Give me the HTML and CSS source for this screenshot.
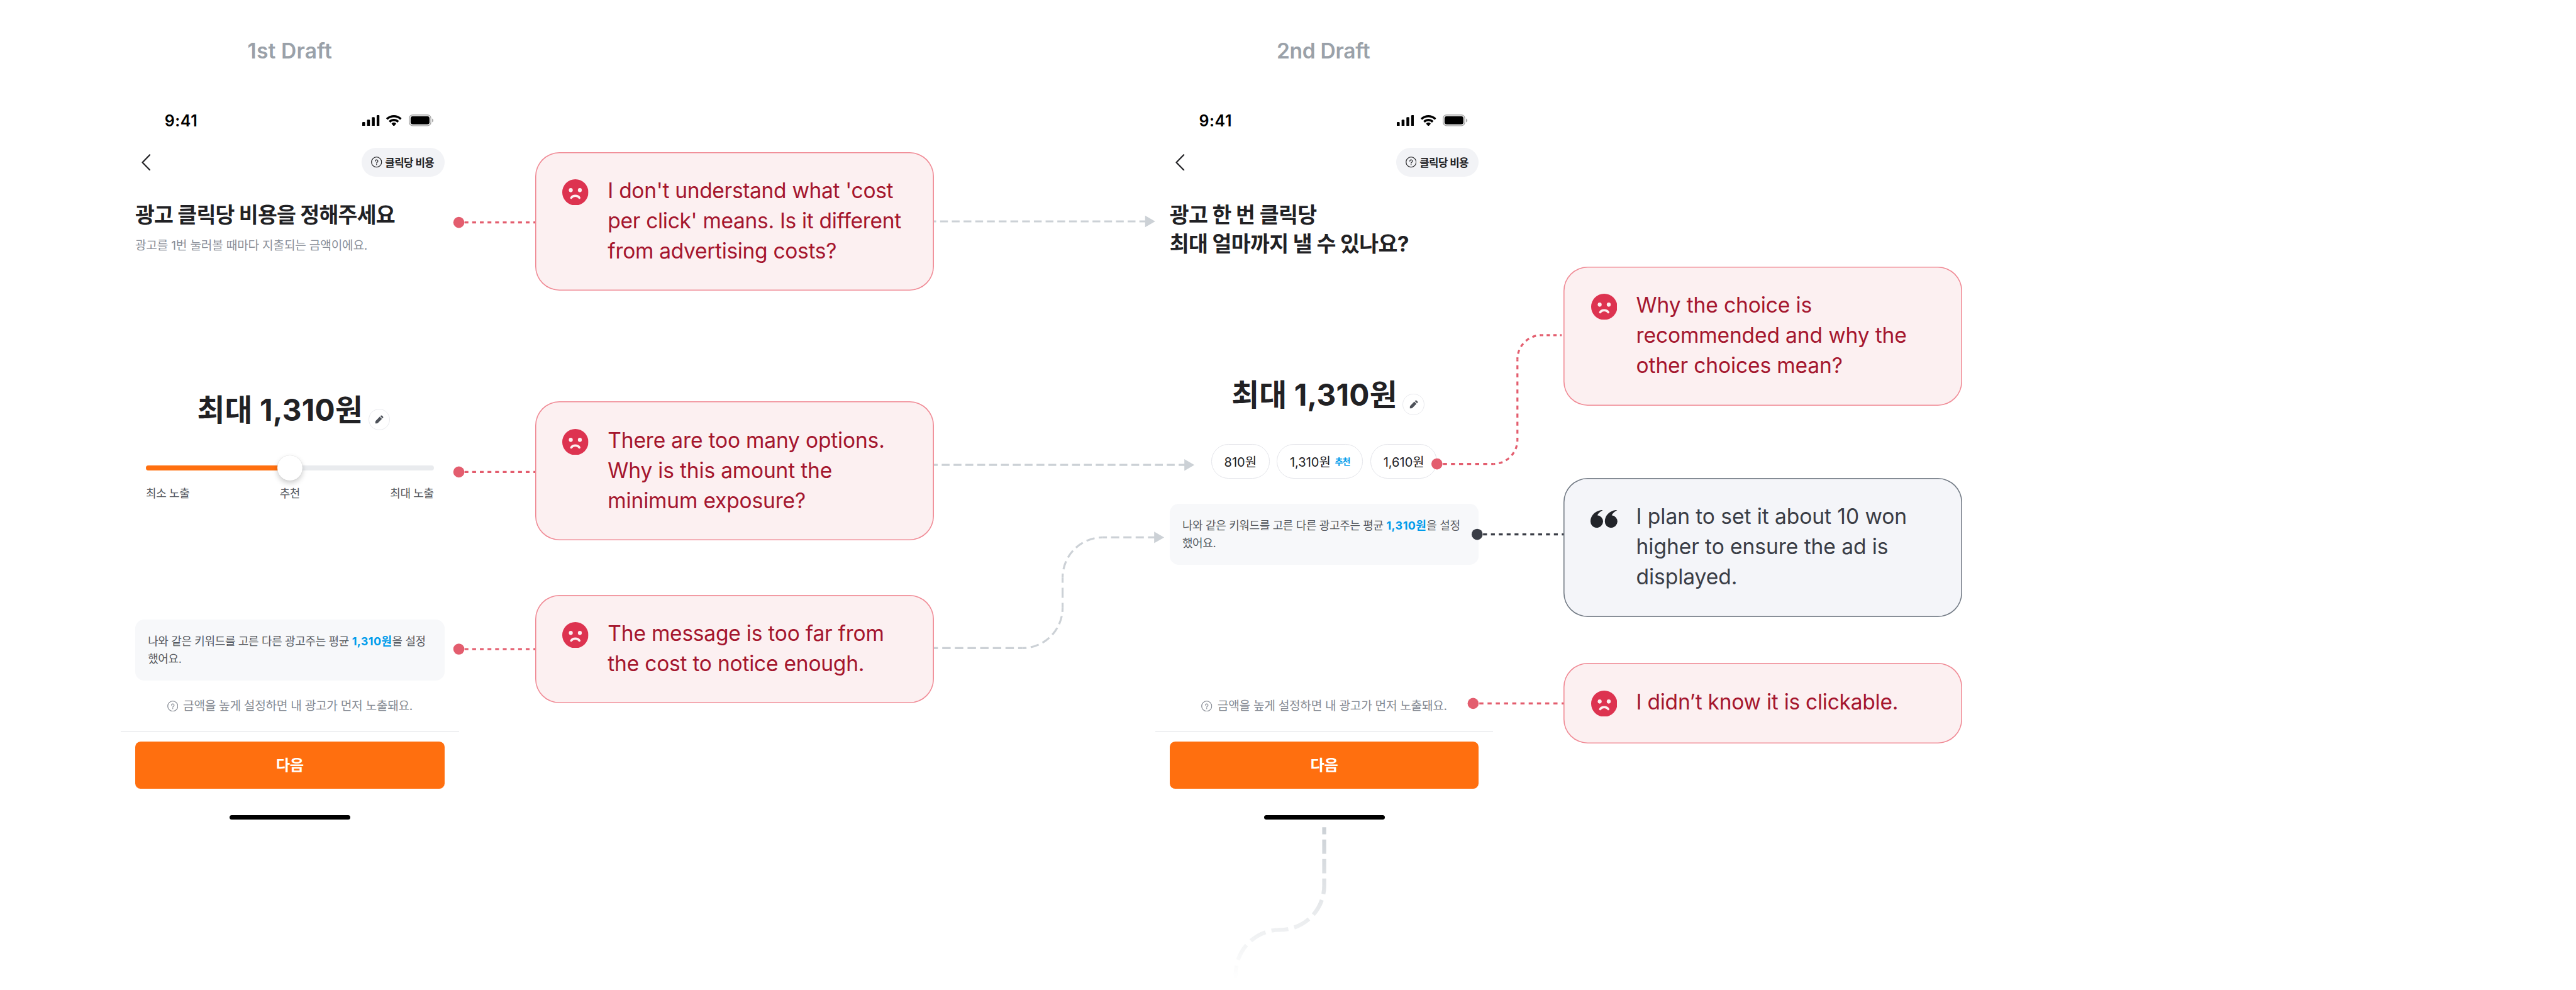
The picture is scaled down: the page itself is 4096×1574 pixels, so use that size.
FILE: index.html
```html
<!DOCTYPE html>
<html lang="ko">
<head>
<meta charset="utf-8">
<title>Draft review board</title>
<link rel="stylesheet" href="styles.css">
</head>
<body>
<svg class="defs" width="0" height="0" aria-hidden="true">
  <symbol id="signal" viewBox="0 0 19.2 12.4">
    <rect x="0" y="7.6" width="3.2" height="4.8" rx=".9"/><rect x="5.33" y="5.1" width="3.2" height="7.3" rx=".9"/>
    <rect x="10.66" y="2.3" width="3.2" height="10.1" rx=".9"/><rect x="16" y="0" width="3.2" height="12.4" rx=".9"/>
  </symbol>
  <symbol id="wifi" viewBox="0 0 17.15 12.33">
    <path d="M8.57 2.47c2.49 0 4.88.92 6.68 2.57.14.13.36.13.49 0l1.3-1.27a.34.34 0 0 0 0-.49C12.3-1.09 4.84-1.09.11 3.28a.34.34 0 0 0 0 .49l1.3 1.27c.13.13.35.13.48 0 1.8-1.65 4.2-2.57 6.68-2.57ZM8.57 6.69c1.36 0 2.66.51 3.67 1.43.14.13.35.13.48 0l1.29-1.32a.37.37 0 0 0 0-.52c-3.07-2.9-7.81-2.9-10.88 0a.37.37 0 0 0 0 .52l1.29 1.32c.13.13.34.13.48 0 1-.92 2.31-1.43 3.67-1.43ZM11.09 9.48a.4.4 0 0 1-.1.28l-2.18 2.46a.32.32 0 0 1-.48 0L6.15 9.76a.4.4 0 0 1 .01-.56c1.39-1.31 3.43-1.31 4.82 0 .07.07.11.17.11.28Z"/>
  </symbol>
  <symbol id="battery" viewBox="0 0 27.5 13">
    <rect x=".5" y=".5" width="24" height="12" rx="3.8" fill="none" stroke="#000" stroke-opacity=".35"/>
    <path d="M26 4.6v4.1c.8-.35 1.35-1.15 1.35-2.05S26.8 4.95 26 4.6Z" fill-opacity=".4"/>
    <rect x="2" y="2" width="21" height="9" rx="2.5"/>
  </symbol>
  <symbol id="help" viewBox="0 0 12 12">
    <g fill="none" stroke="currentColor" stroke-width=".85" stroke-linecap="round" stroke-linejoin="round"><circle cx="6" cy="6" r="5.5"/><path d="M4.6 4.9a1.42 1.42 0 1 1 2.25 1.15C6.3 6.45 6 6.7 6 7.25"/></g>
    <circle cx="6" cy="8.7" r=".5" fill="currentColor"/>
  </symbol>
  <symbol id="pencil" viewBox="0 0 14 14">
    <path d="M7.8 2.6 11.300 6.100 4.900 12.500Q4.100 13.300 3 13.300H.8V11.100Q.8 9.900 1.500 9.100ZM8.700 1.700 9.600.8Q10.500 0 11.400.8L13.100 2.500Q13.900 3.400 13.100 4.300L12.200 5.200Z"/>
  </symbol>
  <symbol id="sad" viewBox="0 0 52 52">
    <circle cx="26" cy="26" r="26" fill="#dd3350"/>
    <ellipse cx="17" cy="21.7" rx="3.9" ry="4.1" fill="#fcf0f1"/><ellipse cx="35" cy="21.7" rx="3.9" ry="4.1" fill="#fcf0f1"/>
    <path d="M17.8 37C19.3 34.4 22.3 32.8 26 32.8S32.7 34.4 34.2 37" fill="none" stroke="#fcf0f1" stroke-width="4.2" stroke-linecap="round"/>
  </symbol>
  <symbol id="quote" viewBox="0 0 54 35">
    <path d="M21.5 0 24.5.3C19 3.2 15 7 13.7 10.2A12.5 12.5 0 1 1 0 22.4C0 11.5 8.5 2 21.5 0Z" fill="#22242a"/>
    <path d="M50 0 53 .3C47.5 3.2 43.5 7 42.2 10.2A12.5 12.5 0 1 1 28.5 22.4C28.5 11.5 37 2 50 0Z" fill="#22242a"/>
  </symbol>
</svg>

<main class="board">
  <section class="draft draft-1">
    <h2 class="draft-name">1st Draft</h2>
    <div class="phone">
      <div class="status">
        <span class="time">9:41</span>
        <span class="status-icons"><svg class="i-signal"><use href="#signal"/></svg><svg class="i-wifi"><use href="#wifi"/></svg><svg class="i-battery"><use href="#battery"/></svg></span>
      </div>
      <div class="nav">
        <svg class="back" viewBox="0 0 14.4 26.4"><path d="M13.2 1.2 1.5 13.2 13.2 25.2"/></svg>
        <span class="pill"><svg class="i-help"><use href="#help"/></svg>클릭당 비용</span>
      </div>
      <div class="intro">
        <h1>광고 클릭당 비용을 정해주세요</h1>
        <p class="sub">광고를 1번 눌러볼 때마다 지출되는 금액이에요.</p>
      </div>
      <div class="price"><strong>최대 1,310원</strong><span class="edit"><svg><use href="#pencil"/></svg></span></div>
      <div class="slider"><div class="track"><div class="fill"></div></div><div class="thumb"></div></div>
      <div class="labels"><span>최소 노출</span><span>추천</span><span>최대 노출</span></div>
      <div class="bottom">
        <p class="info">나와 같은 키워드를 고른 다른 광고주는 평균 <b>1,310원</b>을 설정<br>했어요.</p>
        <p class="hint"><svg class="i-help"><use href="#help"/></svg>금액을 높게 설정하면 내 광고가 먼저 노출돼요.</p>
        <div class="footer"><button class="next">다음</button><div class="home"></div></div>
      </div>
    </div>
  </section>

  <section class="draft draft-2">
    <h2 class="draft-name">2nd Draft</h2>
    <div class="phone">
      <div class="status">
        <span class="time">9:41</span>
        <span class="status-icons"><svg class="i-signal"><use href="#signal"/></svg><svg class="i-wifi"><use href="#wifi"/></svg><svg class="i-battery"><use href="#battery"/></svg></span>
      </div>
      <div class="nav">
        <svg class="back" viewBox="0 0 14.4 26.4"><path d="M13.2 1.2 1.5 13.2 13.2 25.2"/></svg>
        <span class="pill"><svg class="i-help"><use href="#help"/></svg>클릭당 비용</span>
      </div>
      <div class="intro">
        <h1>광고 한 번 클릭당<br>최대 얼마까지 낼 수 있나요?</h1>
      </div>
      <div class="price"><strong>최대 1,310원</strong><span class="edit"><svg><use href="#pencil"/></svg></span></div>
      <div class="chips"><span class="chip">810원</span><span class="chip">1,310원<em>추천</em></span><span class="chip">1,610원</span></div>
      <p class="info">나와 같은 키워드를 고른 다른 광고주는 평균 <b>1,310원</b>을 설정<br>했어요.</p>
      <div class="bottom">
        <p class="hint"><svg class="i-help"><use href="#help"/></svg>금액을 높게 설정하면 내 광고가 먼저 노출돼요.</p>
        <div class="footer"><button class="next">다음</button><div class="home"></div></div>
      </div>
    </div>
  </section>

  <!-- Connectors: every straight or curved piece starts and ends on half a dash -->
  <svg class="connectors" viewBox="0 0 5120 1968" preserveAspectRatio="xMinYMin meet">
    <defs><linearGradient id="fade" gradientUnits="userSpaceOnUse" x1="0" y1="1644" x2="0" y2="1945"><stop offset="0" stop-color="#ccd1d6"/><stop offset="1" stop-color="#ccd1d6" stop-opacity="0"/></linearGradient></defs>
    <g class="line pink">
      <path d="M912 442H1064" stroke-dasharray="7.6 7.6" stroke-dashoffset="3.8"/>
      <path d="M912 938H1064" stroke-dasharray="7.6 7.6" stroke-dashoffset="3.8"/>
      <path d="M912 1290H1064" stroke-dasharray="7.6 7.6" stroke-dashoffset="3.8"/>
      <path d="M2856 922H2968" stroke-dasharray="8 8" stroke-dashoffset="4"/>
      <path d="M2968 922A48 48 0 0 0 3016 874" stroke-dasharray="7.54 7.54" stroke-dashoffset="3.77"/>
      <path d="M3016 874V714" stroke-dasharray="8 8" stroke-dashoffset="4"/>
      <path d="M3016 714A48 48 0 0 1 3064 666" stroke-dasharray="7.54 7.54" stroke-dashoffset="3.77"/>
      <path d="M3064 666H3104" stroke-dasharray="6.67 6.67" stroke-dashoffset="3.33"/>
      <path d="M2928 1398H3108" stroke-dasharray="8.18 8.18" stroke-dashoffset="4.09"/>
    </g>
    <g class="pink-dot"><circle cx="912" cy="442" r="11"/><circle cx="912" cy="938" r="11"/><circle cx="912" cy="1290" r="11"/><circle cx="2856" cy="922" r="11"/><circle cx="2928" cy="1398" r="11"/></g>
    <path class="line dark" d="M2936 1062H3108" stroke-dasharray="7.82 7.82" stroke-dashoffset="3.91"/>
    <circle class="dark-dot" cx="2936" cy="1062" r="11"/>
    <g class="line grey">
      <path d="M1853 440H2277" stroke-dasharray="15.53 7.77" stroke-dashoffset="7.77"/>
      <path d="M1856 924H2355" stroke-dasharray="15.7 7.85" stroke-dashoffset="7.85"/>
      <path d="M1856 1288H2032" stroke-dasharray="16.76 8.38" stroke-dashoffset="8.38"/>
      <path d="M2032 1288A80 80 0 0 0 2112 1208" stroke-dasharray="16.75 8.38" stroke-dashoffset="8.38"/>
      <path d="M2112 1208V1148" stroke-dasharray="20 10" stroke-dashoffset="10"/>
      <path d="M2112 1148A80 80 0 0 1 2192 1068" stroke-dasharray="16.75 8.38" stroke-dashoffset="8.38"/>
      <path d="M2192 1068H2295" stroke-dasharray="16.3 8.15" stroke-dashoffset="8.15"/>
    </g>
    <g class="grey-head"><path d="M2276 428.5 2296 440 2276 451.5Z"/><path d="M2354 912.5 2374 924 2354 935.5Z"/><path d="M2294 1056.5 2314 1068 2294 1079.5Z"/></g>
    <g class="line fading">
      <path d="M2632 1644V1760" stroke-dasharray="28.4 10.27" stroke-dashoffset="14.2"/>
      <path d="M2632 1760A88 88 0 0 1 2544 1848" stroke-dasharray="33.9 12.18" stroke-dashoffset="16.95"/>
      <path d="M2544 1848A88 88 0 0 0 2456 1936V1946" stroke-dasharray="33.9 12.18" stroke-dashoffset="16.95"/>
    </g>
  </svg>

  <article class="note note-cost"><svg class="face"><use href="#sad"/></svg><p>I don't understand what 'cost<br>per click' means. Is it different<br>from advertising costs?</p></article>
  <article class="note note-options"><svg class="face"><use href="#sad"/></svg><p>There are too many options.<br>Why is this amount the<br>minimum exposure?</p></article>
  <article class="note note-message"><svg class="face"><use href="#sad"/></svg><p>The message is too far from<br>the cost to notice enough.</p></article>
  <article class="note note-choice"><svg class="face"><use href="#sad"/></svg><p>Why the choice is<br>recommended and why the<br>other choices mean?</p></article>
  <article class="note note-plan"><svg class="quote"><use href="#quote"/></svg><p>I plan to set it about 10 won<br>higher to ensure the ad is<br>displayed.</p></article>
  <article class="note note-click"><svg class="face"><use href="#sad"/></svg><p>I didn’t know it is clickable.</p></article>
</main>
</body>
</html>
```
FILE: styles.css
```css
/* --u is one point of the phone screens (375 x 812) */
:root { --u: 1.4336px; }
* { box-sizing: border-box; }
html, body { margin: 0; padding: 0; overflow: hidden; background: #fff; }
body { font-family: Inter, "Noto Sans CJK KR", sans-serif; color: #212124; }
h1, h2, p { margin: 0; }
svg { display: block; flex: none; }
.defs { position: absolute; }
.board { position: relative; width: 4096px; height: 1574px; overflow: hidden; }

.draft { position: absolute; top: 0; width: calc(var(--u) * 375); }
.draft-1 { left: 192px; }
.draft-2 { left: 1836.8px; }
.draft-name { height: 150.4px; padding-top: 57px; font-size: 33.6px; line-height: 48px; font-weight: 600; letter-spacing: 0.15px; text-align: center; color: #9aa1a9; }
.draft-2 .draft-name { letter-spacing: -0.3px; padding-right: 3px; }

.phone { display: flex; flex-direction: column; height: calc(var(--u) * 812); }
.status { display: flex; align-items: center; justify-content: space-between; height: calc(var(--u) * 47); padding: calc(var(--u) * 10.4) calc(var(--u) * 28.3) 0 calc(var(--u) * 48.7); }
.time { font-size: 25px; line-height: 30px; font-weight: 600; letter-spacing: 0.5px; color: #000; }
.status-icons { display: flex; align-items: center; gap: calc(var(--u) * 7.5); fill: #000; }
.i-signal { width: calc(var(--u) * 19.2); height: calc(var(--u) * 12.4); }
.i-wifi { width: calc(var(--u) * 17.15); height: calc(var(--u) * 12.33); }
.i-battery { width: calc(var(--u) * 27.5); height: calc(var(--u) * 13); }

.nav { display: flex; align-items: center; justify-content: space-between; height: calc(var(--u) * 56); padding: 0 calc(var(--u) * 16) 0 32.7px; }
.back { width: 14.4px; height: 26.4px; fill: none; stroke: #212124; stroke-width: 2.2; stroke-linecap: round; stroke-linejoin: round; }
.pill { display: flex; align-items: center; gap: 4.8px; width: calc(var(--u) * 92); height: calc(var(--u) * 32); padding-left: 15.3px; border-radius: calc(var(--u) * 16); background: #f2f3f6; font-size: 16.8px; font-weight: 700; letter-spacing: -0.55px; white-space: nowrap; }
.i-help { width: calc(var(--u) * 12.2); height: calc(var(--u) * 12.2); }

.intro { height: calc(var(--u) * 222.6); padding: calc(var(--u) * 14.9) calc(var(--u) * 16) 0; white-space: nowrap; }
.draft-2 .intro { height: calc(var(--u) * 205.9); }
h1 { font-size: 33.6px; line-height: calc(var(--u) * 32); font-weight: 700; letter-spacing: -0.78px; }
.draft-2 h1 { letter-spacing: -0.64px; }
.sub { margin-top: calc(var(--u) * 6.6); font-size: 19.2px; line-height: calc(var(--u) * 22); letter-spacing: -0.25px; color: #8b909a; }

.price { display: flex; align-items: flex-end; gap: 8.6px; height: calc(var(--u) * 48); padding-left: 121.4px; white-space: nowrap; }
.price strong { position: relative; top: 1.2px; font-size: 47.7px; line-height: calc(var(--u) * 48); font-weight: 700; letter-spacing: 0.2px; }
.edit { display: flex; align-items: center; justify-content: center; width: calc(var(--u) * 24); height: calc(var(--u) * 24); margin-bottom: calc(var(--u) * 1.4); border: 1px solid #e9eaee; border-radius: 50%; fill: #4d5159; }
.edit svg { width: 14px; height: 14px; }

.slider { display: grid; align-items: center; height: calc(var(--u) * 28); margin: calc(var(--u) * 26.4) calc(var(--u) * 27.9) 0; }
.slider > * { grid-area: 1 / 1; }
.track { height: calc(var(--u) * 6); border-radius: calc(var(--u) * 3); background: #e9ebee; overflow: hidden; }
.fill { width: 50%; height: 100%; background: #ff6f0f; }
.thumb { justify-self: center; width: calc(var(--u) * 28); height: calc(var(--u) * 28); border-radius: 50%; background: #fff; box-shadow: 0 0 1px rgba(0,0,0,.2), 0 4px 8px rgba(0,0,0,.2); }
.labels { display: grid; grid-template-columns: 1fr auto 1fr; margin: calc(var(--u) * 4.7) calc(var(--u) * 27.9) 0; font-size: 18px; line-height: calc(var(--u) * 20); letter-spacing: -0.4px; color: #555960; }
.labels span:last-child { text-align: right; }

.chips { display: flex; justify-content: center; gap: calc(var(--u) * 8.2); margin-top: calc(var(--u) * 30.7); }
.chip { display: flex; align-items: center; justify-content: center; height: calc(var(--u) * 38); padding: 0 19.6px; border: 1px solid #e4e5ea; border-radius: calc(var(--u) * 19); background: #fff; font-size: 20px; white-space: nowrap; }
.chip em { margin-left: 6.6px; font-size: 14.2px; font-style: normal; font-weight: 700; letter-spacing: -0.9px; color: #009ceb; }

.info { height: calc(var(--u) * 68); margin: 0 calc(var(--u) * 16); padding: calc(var(--u) * 14.5) 0 0 20.2px; border-radius: calc(var(--u) * 10); background: #f7f8fa; font-size: 18px; line-height: calc(var(--u) * 20); letter-spacing: -0.36px; white-space: nowrap; color: #555960; }
.info b { letter-spacing: 0.4px; color: #009ceb; }
.draft-2 .info { margin-top: calc(var(--u) * 28.1); }
.bottom { margin-top: auto; }
.hint { display: flex; align-items: center; justify-content: center; gap: 8px; margin: calc(var(--u) * 18) 0 calc(var(--u) * 17.5); font-size: 19.2px; line-height: calc(var(--u) * 20); letter-spacing: -0.32px; white-space: nowrap; color: #868b94; }
.footer { display: flex; flex-direction: column; align-items: center; justify-content: space-between; height: calc(var(--u) * 106.5); padding: calc(var(--u) * 11.4) 0 calc(var(--u) * 8); border-top: 1px solid #dfe0e4; }
.next { width: calc(var(--u) * 343); height: calc(var(--u) * 52.2); border: 0; border-radius: calc(var(--u) * 6); background: #ff6f0f; color: #fff; font: 700 24.4px/1 Inter, "Noto Sans CJK KR", sans-serif; letter-spacing: -0.4px; }
.home { width: calc(var(--u) * 134); height: calc(var(--u) * 5); border-radius: calc(var(--u) * 2.5); background: #000; }

.connectors { position: absolute; left: 0; top: 0; width: 4096px; height: 1574.4px; }
.line { fill: none; stroke-width: 4; }
.pink { stroke: #e35d6e; }
.pink-dot { fill: #e35d6e; }
.dark { stroke: #3a3d46; }
.dark-dot { fill: #3a3d46; }
.grey { stroke: #ccd1d6; }
.grey-head { fill: #ccd1d6; }
.fading { stroke: url(#fade); stroke-width: 8; }

.note { position: absolute; display: flex; align-items: flex-start; width: 633.6px; padding: 37.4px 0 39.4px 43.2px; border-radius: 38.4px; background: #fcf0f1; box-shadow: inset 0 0 0 1.6px #f08b96; color: #a5162e; font-size: 33.6px; line-height: 48px; letter-spacing: -0.15px; white-space: nowrap; }
.note-cost { left: 851.2px; top: 241.6px; letter-spacing: -0.34px; }
.note-options { left: 851.2px; top: 638.4px; letter-spacing: -0.2px; }
.note-message { left: 851.2px; top: 945.6px; letter-spacing: -0.25px; }
.note-choice { left: 2486.4px; top: 424px; }
.note-plan { left: 2486.4px; top: 760px; background: #f4f5f9; box-shadow: inset 0 0 0 1.6px #737b85; color: #3a3d46; letter-spacing: -0.08px; }
.note-click { left: 2486.4px; top: 1054.4px; height: 128px; letter-spacing: -0.28px; }
.face { width: 41.6px; height: 41.6px; margin: 5.8px 30.4px 0 0; }
.quote { width: 43.2px; height: 28px; margin: 13.7px 29.6px 0 -0.8px; }
```
